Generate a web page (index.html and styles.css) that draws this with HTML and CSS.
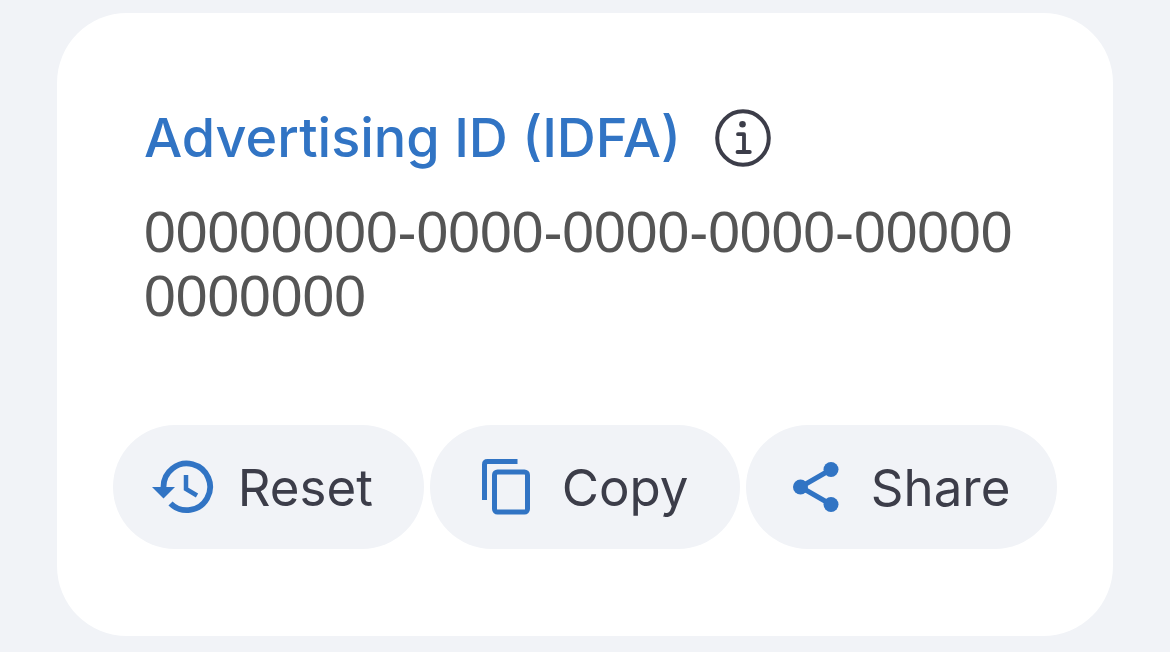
FILE: index.html
```
<!DOCTYPE html>
<html lang="en">
<head>
<meta charset="utf-8">
<meta name="viewport" content="width=device-width, initial-scale=1">
<title>Advertising ID</title>
<link rel="stylesheet" href="styles.css">
</head>
<body>
<main class="card">
  <header class="heading">
    <h1 class="title">Advertising ID (IDFA)</h1>
    <button class="info" type="button" aria-label="About the advertising ID">
      <svg class="info-icon" viewBox="0 0 56 58" fill="none" stroke="currentColor" aria-hidden="true">
        <ellipse cx="28" cy="29" rx="25.8" ry="26.8" stroke-width="4"/>
        <circle cx="27.5" cy="15.3" r="3.300" fill="currentColor" stroke="none"/>
        <path d="M23 25.200H29V43M22.500 43H34.800" stroke-width="3.800" stroke-linecap="round" stroke-linejoin="round"/>
      </svg>
    </button>
  </header>
  <p class="identifier">00000000-0000-0000-0000-000000000000</p>
  <div class="actions">
    <button class="action action-reset" type="button">
      <svg class="icon-reset" viewBox="0 0 62 54" aria-hidden="true">
        <path d="M11.500 27A23.300 23.300 0 1 1 18.500 43.500" fill="none" stroke="currentColor" stroke-width="5.800"/>
        <path d="M0 27H23L11.500 38.500Z" fill="currentColor"/>
        <path d="M34 15V29L45 35.500" fill="none" stroke="currentColor" stroke-width="4.500"/>
      </svg>
      <span>Reset</span>
    </button>
    <button class="action" type="button">
      <svg class="icon-copy" viewBox="0 0 48 56" fill="none" stroke="currentColor" stroke-width="5" aria-hidden="true">
        <path d="M2.500 41V5.500Q2.500 2.500 5.500 2.500H35.500"/>
        <rect x="12.500" y="13" width="33" height="40" rx="3"/>
      </svg>
      <span>Copy</span>
    </button>
    <button class="action" type="button">
      <svg class="icon-share" viewBox="0 0 46 50" fill="currentColor" aria-hidden="true">
        <path d="M38 7.500L7.500 25L38 42.500" fill="none" stroke="currentColor" stroke-width="5"/>
        <circle cx="38" cy="7.500" r="7.500"/>
        <circle cx="7.500" cy="25" r="7.500"/>
        <circle cx="38" cy="42.500" r="7.500"/>
      </svg>
      <span>Share</span>
    </button>
  </div>
</main>
</body>
</html>
```
FILE: styles.css
```
* { box-sizing: border-box; }

body {
  margin: 0;
  padding: 13px 57px 16px;
  background: #f1f3f7;
  font-family: "Liberation Sans", Arial, sans-serif;
}

.card {
  padding: 93px 56px 87px;
  border-radius: 70px;
  background: #fff;
}

.heading {
  display: flex;
  align-items: center;
  gap: 34px;
  padding: 0 31px;
}

.title {
  margin: 0;
  color: #3174c4;
  font-family: Inter, sans-serif;
  font-size: 54px;
  font-weight: 500;
  line-height: 64px;
}

.info {
  display: flex;
  padding: 0;
  border: 0;
  background: none;
  color: #3c3d49;
}

.info-icon { width: 56px; height: 58px; }

.identifier {
  margin: 30px 0 0;
  padding: 0 31px;
  color: #555;
  font-size: 57px;
  line-height: 64px;
  word-break: break-all;
}

.actions {
  display: grid;
  grid-template-columns: repeat(3, 1fr);
  gap: 6px;
  margin-top: 97px;
}

.action {
  display: flex;
  align-items: center;
  justify-content: center;
  gap: 32px;
  height: 124px;
  padding: 0;
  border: 0;
  border-radius: 62px;
  background: #f1f3f7;
  color: #3c3d49;
  font-family: Inter, sans-serif;
  font-size: 51px;
}

.action svg { color: #3174c4; flex: none; }
.action-reset { gap: 24px; padding-right: 12px; }
.icon-reset { width: 62px; height: 54px; }
.icon-copy { width: 48px; height: 56px; }
.icon-share { width: 46px; height: 50px; }
```
